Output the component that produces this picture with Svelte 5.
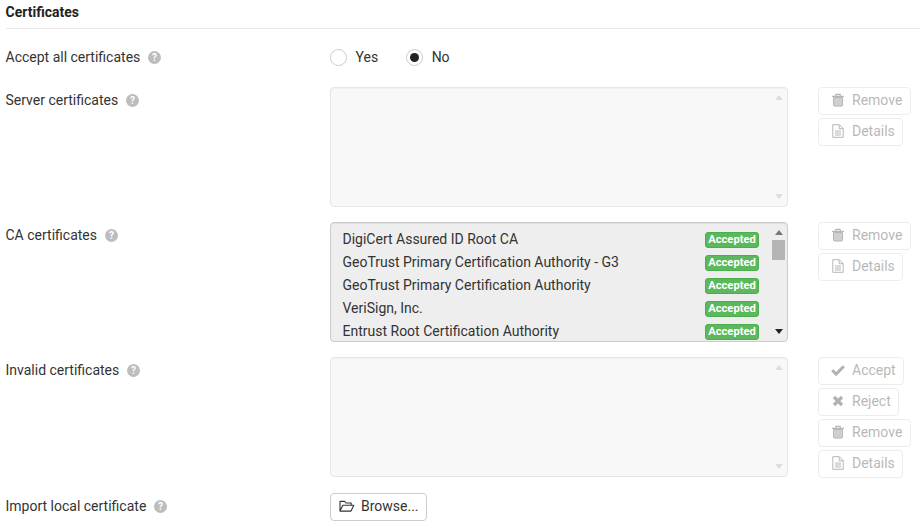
<script>
  const cas = [
    'DigiCert Assured ID Root CA',
    'GeoTrust Primary Certification Authority - G3',
    'GeoTrust Primary Certification Authority',
    'VeriSign, Inc.',
    'Entrust Root Certification Authority'
  ];
  const rows = [
    { label: 'Server certificates', items: [], buttons: ['remove', 'details'] },
    { label: 'CA certificates', items: cas, buttons: ['remove', 'details'] },
    { label: 'Invalid certificates', items: [], buttons: ['accept', 'reject', 'remove', 'details'] }
  ];
  const names = { remove: 'Remove', details: 'Details', accept: 'Accept', reject: 'Reject' };
</script>

{#snippet help()}
  <svg class="help" viewBox="0 0 13 13" width="13" height="13" aria-hidden="true">
    <circle cx="6.5" cy="6.5" r="6.5" fill="#bdbdbd" />
    <text x="6.5" y="10" text-anchor="middle" class="q">?</text>
  </svg>
{/snippet}

{#snippet icon(name)}
  <svg class="ico" viewBox="0 0 14 14" width="14" height="14" aria-hidden="true">
    {#if name === 'remove'}
      <path d="M2.5 4.5h9v7.4a1.2 1.2 0 0 1-1.2 1.2H3.7a1.2 1.2 0 0 1-1.2-1.2z" fill="#777" stroke="#333" stroke-width="1" />
      <path d="M1 3.3h12M4.8 3V1.3h4.4V3" fill="none" stroke="#333" stroke-width="1.2" />
    {:else if name === 'details'}
      <path d="M1.8.7h6.6l3.8 3.8v8.8H1.8zM8.2.9v3.8H12M4 7h6M4 9h6M4 11h6" fill="none" stroke="#333" stroke-width="1" />
    {:else if name === 'accept'}
      <path d="M1.2 7.2l3.9 3.9 7.7-7.9" fill="none" stroke="#222" stroke-width="3" />
    {:else}
      <path d="M3 3l8 8M11 3l-8 8" fill="none" stroke="#222" stroke-width="3.2" />
    {/if}
  </svg>
{/snippet}

<main class="page">
  <h2>Certificates</h2>

  <div class="row radio-row">
    <div class="label">Accept all certificates {@render help()}</div>
    <div class="radios">
      <label class="radio"><span class="dot"></span>Yes</label>
      <label class="radio"><span class="dot on"></span>No</label>
    </div>
  </div>

  {#each rows as r}
    <div class="row list-row">
      <div class="label">{r.label} {@render help()}</div>
      <div class="list" class:active={r.items.length > 0}>
        <ul>
          {#each r.items as it}
            <li><span>{it}</span><b class="badge">Accepted</b></li>
          {/each}
        </ul>
        <div class="bar">
          <i class="up"></i>
          {#if r.items.length}<i class="thumb"></i>{/if}
          <i class="down"></i>
        </div>
      </div>
      <div class="actions">
        {#each r.buttons as b}
          <button disabled>{@render icon(b)}{names[b]}</button>
        {/each}
      </div>
    </div>
  {/each}

  <div class="row browse-row">
    <div class="label">Import local certificate {@render help()}</div>
    <button class="browse">
      <svg viewBox="0 0 16 14" width="16" height="14" aria-hidden="true">
        <path d="M1 12V2.4h4.6l1.4 1.6h5.2v2.2M1 12.1l2.8-5.9h11l-2.8 5.9z" fill="none" stroke="#333" stroke-width="1.1" stroke-linejoin="round" />
      </svg>
      Browse...
    </button>
  </div>
</main>

<style>
  :global(body) {
    margin: 0;
    background: #fff;
    font-family: Roboto, "Liberation Sans", sans-serif;
    font-size: 14px;
    color: #333;
  }
  .page {
    width: 920px;
    height: 526px;
    box-sizing: border-box;
    padding-left: 5.5px;
    overflow: hidden;
  }
  h2 {
    margin: 0;
    height: 28px;
    line-height: 24px;
    font-size: 14px;
    font-weight: 700;
    color: #222;
    border-bottom: 1px solid #e8e8e8;
  }
  .row {
    display: grid;
    grid-template-columns: 324.5px 458px auto;
    column-gap: 0;
  }
  .label {
    display: flex;
    align-items: center;
    gap: 8px;
    height: 26px;
    line-height: 26px;
  }
  .help { flex: none; }
  .q {
    font: 700 10px Roboto, sans-serif;
    fill: #fff;
  }
  .radio-row {
    margin-top: 15px;
    height: 43px;
  }
  .radios {
    display: flex;
    gap: 28px;
    height: 26px;
    align-items: center;
  }
  .radio {
    display: flex;
    align-items: center;
    gap: 8.5px;
  }
  .dot {
    width: 15px;
    height: 15px;
    border: 1px solid #ccc;
    border-radius: 50%;
    background: #fff;
    box-sizing: content-box;
    position: relative;
  }
  .dot.on::after {
    content: "";
    position: absolute;
    left: 3px;
    top: 3px;
    width: 9px;
    height: 9px;
    border-radius: 50%;
    background: #222;
  }
  .list-row {
    height: 135px;
  }
  .list-row .label { height: 26px; }
  .list {
    height: 120px;
    box-sizing: border-box;
    border: 1px solid #e6e6e6;
    border-radius: 4px;
    background: #f8f8f8;
    display: flex;
    overflow: hidden;
    box-shadow: inset 0 1px 1px rgba(0, 0, 0, 0.03);
  }
  .list.active {
    background: #eee;
    border-color: #ccc;
    box-shadow: inset 0 1px 1px rgba(0, 0, 0, 0.075);
  }
  ul {
    flex: 1;
    margin: 0;
    padding: 4px 11px 0 11.5px;
    list-style: none;
    min-width: 0;
  }
  li {
    display: flex;
    justify-content: space-between;
    align-items: center;
    height: 23px;
    color: #333;
  }
  .badge {
    width: 54px;
    height: 16px;
    margin-top: 2px;
    box-sizing: border-box;
    border: 1px solid #4cae4c;
    border-radius: 3px;
    background: #5cb85c;
    color: #fff;
    font-size: 11.2px;
    font-weight: 700;
    line-height: 14px;
    text-align: center;
  }
  .bar {
    width: 17px;
    flex: none;
    position: relative;
  }
  .bar i { position: absolute; display: block; }
  .up, .down {
    left: 5px;
    width: 0;
    height: 0;
    border-left: 4px solid transparent;
    border-right: 4px solid transparent;
  }
  .up { top: 7px; border-bottom: 5px solid #ddd; }
  .down { bottom: 7px; border-top: 5px solid #ddd; }
  .active .up { border-bottom-color: #777; }
  .active .down { border-top-color: #222; }
  .thumb {
    left: 2px;
    top: 17px;
    width: 13px;
    height: 20px;
    background: #b5b5b5;
  }
  .actions {
    margin-left: 30px;
    display: flex;
    flex-direction: column;
    align-items: flex-start;
    gap: 3px;
  }
  button {
    height: 28px;
    box-sizing: border-box;
    display: inline-flex;
    align-items: center;
    gap: 7px;
    padding: 0 7.5px 2px 12px;
    font: 14px Roboto, sans-serif;
    background: #fff;
    border: 1px solid #ccc;
    border-radius: 4px;
    color: #333;
    white-space: nowrap;
  }
  button:disabled {
    opacity: 0.35;
  }
  .browse-row {
    margin-top: 1px;
    grid-template-columns: 324.5px auto;
    justify-content: start;
  }
  .browse {
    height: 28px;
    padding: 0 7px 2px 8px;
    gap: 6px;
  }
</style>
